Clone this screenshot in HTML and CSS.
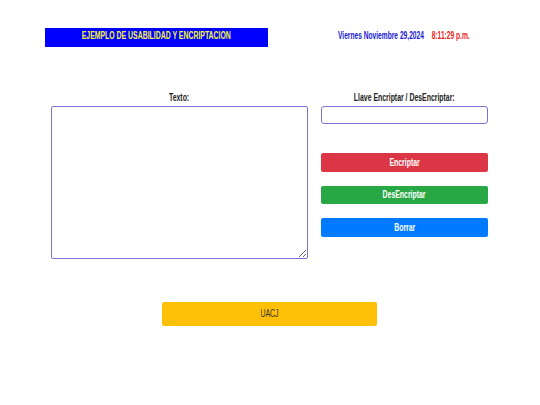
FILE: index.html
```html
<!DOCTYPE html>
<html lang="es">
<head>
<meta charset="utf-8">
<title>Usabilidad y Encriptacion</title>
<link rel="stylesheet" href="styles.css">
</head>
<body>
<header class="top">
  <div class="title"><span class="nar">EJEMPLO DE USABILIDAD Y ENCRIPTACION</span></div>
  <div class="clock"><span class="date">Viernes Noviembre 29,2024</span><span class="time">8:11:29 p.m.</span></div>
</header>
<main class="work">
  <section class="text-col">
    <label class="lbl" for="texto"><span class="nar">Texto:</span></label>
    <textarea id="texto" class="area"></textarea>
  </section>
  <section class="key-col">
    <label class="lbl" for="llave"><span class="nar">Llave Encriptar / DesEncriptar:</span></label>
    <input id="llave" class="key" type="text">
    <div class="actions">
      <button class="btn red"><span class="nar">Encriptar</span></button>
      <button class="btn green"><span class="nar">DesEncriptar</span></button>
      <button class="btn blue"><span class="nar">Borrar</span></button>
    </div>
  </section>
</main>
<footer class="foot">
  <button class="btn yellow"><span class="nar">UACJ</span></button>
</footer>
</body>
</html>
```

FILE: styles.css
```css
html, body {
  margin: 0;
  padding: 0;
  background: #ffffff;
}
body {
  width: 540px;
  height: 405px;
  font-family: "Liberation Sans", Arial, sans-serif;
}
.nar {
  display: inline-block;
  transform: scaleX(0.67);
  transform-origin: center;
  white-space: nowrap;
}
.top {
  display: flex;
  align-items: flex-start;
  padding-top: 28px;
  padding-left: 45px;
  height: 19px;
}
.title {
  width: 224px;
  height: 19px;
  background: #0000ff;
  color: #f5f53a;
  font-weight: bold;
  font-size: 10.3px;
  text-align: center;
  line-height: 16px;
}
.clock {
  margin-left: 70px;
  margin-top: 1px;
  font-weight: bold;
  font-size: 10.3px;
  line-height: 13px;
  display: inline-flex;
  gap: 12px;
  white-space: nowrap;
  transform: scaleX(0.645);
  transform-origin: left center;
}
.date { color: #1a1ad6; }
.time { color: #ee2222; }
.work {
  display: flex;
  margin-top: 44px;
  padding-left: 51px;
  gap: 13px;
}
.text-col, .key-col {
  display: flex;
  flex-direction: column;
  align-items: center;
}
.text-col { width: 257px; }
.key-col { width: 167px; }
.lbl {
  font-weight: bold;
  font-size: 10.3px;
  color: #222;
  line-height: 13px;
  margin-bottom: 2px;
}
.area {
  box-sizing: border-box;
  width: 257px;
  height: 153px;
  border: 1px solid #7b74d6;
  border-radius: 2px;
  margin: 0;
  padding: 0;
  resize: both;
}
.key {
  box-sizing: border-box;
  width: 167px;
  height: 18px;
  border: 1px solid #7b74d6;
  border-radius: 3px;
  margin: 0;
  padding: 0;
}
.actions {
  display: flex;
  flex-direction: column;
  gap: 14px;
  margin-top: 29px;
}
.btn {
  box-sizing: border-box;
  width: 167px;
  height: 18.5px;
  border: none;
  border-radius: 2px;
  color: #fff;
  font-family: inherit;
  font-weight: bold;
  font-size: 10.3px;
  padding: 0;
}
.red { background: #dc3545; }
.green { background: #28a745; }
.blue { background: #007bff; }
.foot {
  padding-left: 162px;
  margin-top: 43px;
}
.yellow {
  width: 215px;
  height: 23.5px;
  background: #ffc107;
  color: #333;
  font-weight: normal;
}
```
